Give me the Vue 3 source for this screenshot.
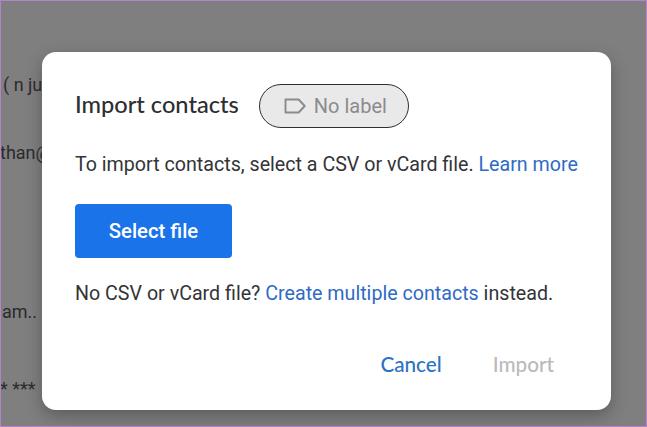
<template>
  <div class="screen">
    <!-- page text showing behind the dimmed overlay -->
    <div class="behind">
      <span class="behind-line line-a">( n ju</span>
      <span class="behind-line line-b">than@</span>
      <span class="behind-line line-c">am..</span>
      <span class="behind-line line-d">* ***</span>
    </div>

    <div class="dialog">
      <div class="dialog__head">
        <h2 class="dialog__title">Import contacts</h2>
        <div class="label-chip">
          <svg class="label-chip__icon" viewBox="0 0 24 24" width="24" height="24">
            <path d="M2.5 5.5h13.2l6 6.5-6 6.5H2.5z" fill="none" stroke="#8b8b8d" stroke-width="1.9" stroke-linejoin="round" />
          </svg>
          <span>No label</span>
        </div>
      </div>

      <p class="dialog__text">
        To import contacts, select a CSV or vCard file. <a class="link">Learn more</a>
      </p>

      <button class="select-btn">Select file</button>

      <p class="dialog__text dialog__text--second">
        No CSV or vCard file? <a class="link">Create multiple contacts</a> instead.
      </p>

      <div class="dialog__actions">
        <button class="text-btn text-btn--cancel">Cancel</button>
        <button class="text-btn text-btn--off">Import</button>
      </div>
    </div>
  </div>
</template>

<script setup>
</script>

<style>
html,
body {
  margin: 0;
  padding: 0;
}
</style>

<style scoped>
.screen {
  position: relative;
  box-sizing: border-box;
  width: 647px;
  height: 427px;
  padding: 51px 35px 16px 41px;
  background: #807f80;
  border: 1px solid #b583c9;
  overflow: hidden;
  font-family: Roboto, "Liberation Sans", sans-serif;
}

.behind-line {
  position: absolute;
  color: #2b2a2c;
  font-size: 18px;
  white-space: nowrap;
}

.line-a { left: 2px; top: 73px; }
.line-b { left: -1px; top: 141px; }
.line-c { left: 1px; top: 300px; }
.line-d { left: -1px; top: 377px; }

.dialog {
  position: relative;
  box-sizing: border-box;
  height: 358px;
  padding: 32px 33px 0 33px;
  background: #fff;
  border-radius: 14px;
  box-shadow: 0 6px 16px rgba(50, 48, 50, 0.45);
}

.dialog__head {
  display: flex;
  align-items: center;
  gap: 20px;
}

.dialog__title {
  margin: -1px 0 3px;
  font-family: Lato, sans-serif;
  font-size: 23.6px;
  font-weight: 500;
  color: #2d2e31;
}

.label-chip {
  box-sizing: border-box;
  display: flex;
  align-items: center;
  gap: 7px;
  width: 150px;
  height: 44px;
  padding-left: 23px;
  background: #e9e9ea;
  border: 1px solid #2f2f31;
  border-radius: 22px;
  font-size: 20px;
  color: #8b8b8d;
}

.dialog__text {
  margin: 25px 0 0;
  font-size: 19.65px;
  line-height: 24px;
  color: #333437;
  white-space: nowrap;
}

.dialog__text--second {
  margin-top: 24px;
}

.link {
  color: #2f6bc5;
}

.select-btn {
  display: block;
  width: 157px;
  height: 54px;
  margin-top: 27px;
  padding: 0;
  background: #1a73e8;
  border: none;
  border-radius: 4px;
  font-family: Roboto, sans-serif;
  font-size: 20.3px;
  font-weight: 500;
  color: #fff;
}

.dialog__actions {
  display: flex;
  justify-content: flex-end;
  gap: 51px;
  margin-top: 46px;
  padding-right: 24px;
}

.text-btn {
  padding: 0;
  background: none;
  border: none;
  font-family: Lato, sans-serif;
  font-size: 20.7px;
  font-weight: 500;
}

.text-btn--cancel {
  color: #2b73c2;
}

.text-btn--off {
  color: #b9babc;
}
</style>
